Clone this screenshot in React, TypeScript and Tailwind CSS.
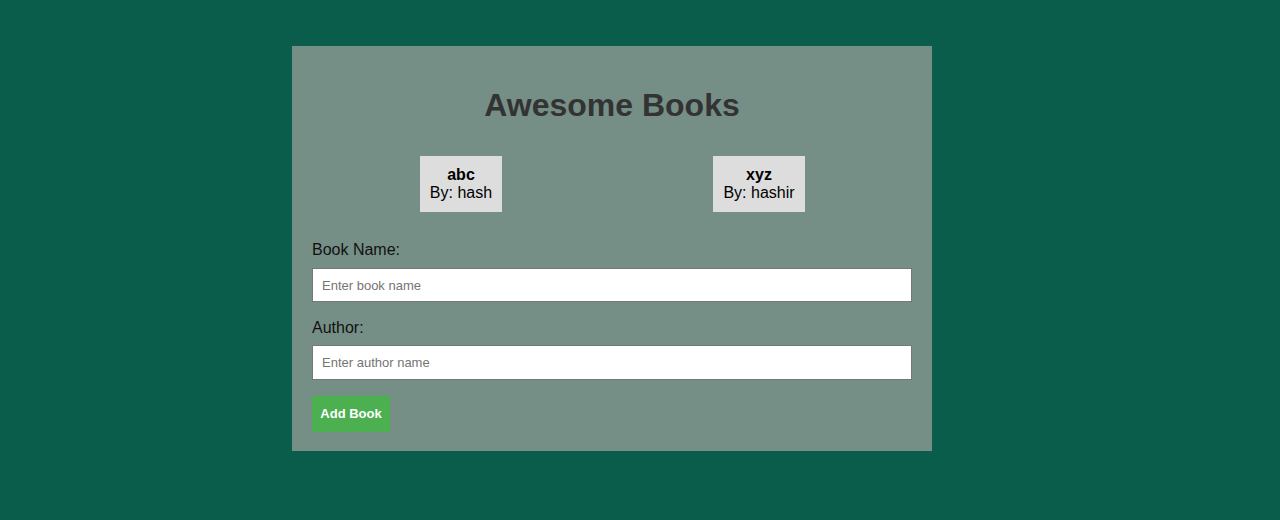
import React from "react";

const books = [
    { title: "abc", author: "hash" },
    { title: "xyz", author: "hashir" },
];

const App = () => {
    return (
        <div className="min-h-[520px] w-full bg-[#0a5c4b] pt-[46px] font-['Liberation_Sans',Arial,sans-serif]">
            <div className="ml-[292px] w-[640px] bg-[#758f86] px-5 pt-5 pb-[19px]">
                <h1 className="mt-[21px] mb-[32px] h-[37px] text-center text-[32px] leading-[37px] font-bold text-[#333333]">
                    Awesome Books
                </h1>
                <div className="grid grid-cols-2 pr-[4px]">
                    {books.map((b) => (
                        <div key={b.title} className="flex justify-center">
                            <div className="flex h-[56px] flex-col items-center justify-center bg-[#dddddd] px-[10px] text-[16px] leading-[18px] text-black">
                                <span className="font-bold">{b.title}</span>
                                <span>By: {b.author}</span>
                            </div>
                        </div>
                    ))}
                </div>
                <form className="mt-[29px] flex flex-col" onSubmit={(e) => e.preventDefault()}>
                    <label className="h-[18px] text-[16px] leading-[18px] text-[#111]">Book Name:</label>
                    <input
                        type="text"
                        placeholder="Enter book name"
                        className="mt-[9px] h-[34px] w-full border border-[#777] bg-white px-[9px] text-[13px] text-black placeholder:text-[#757575] outline-none"
                    />
                    <label className="mt-[17px] h-[18px] text-[16px] leading-[18px] text-[#111]">Author:</label>
                    <input
                        type="text"
                        placeholder="Enter author name"
                        className="mt-[8px] h-[35px] w-full border border-[#777] bg-white px-[9px] text-[13px] text-black placeholder:text-[#757575] outline-none"
                    />
                    <div className="mt-4">
                        <button
                            type="submit"
                            className="h-[36px] w-[78px] bg-[#4caf50] text-center text-[13px] font-semibold text-white"
                        >
                            Add Book
                        </button>
                    </div>
                </form>
            </div>
        </div>
    );
};

export default App;
